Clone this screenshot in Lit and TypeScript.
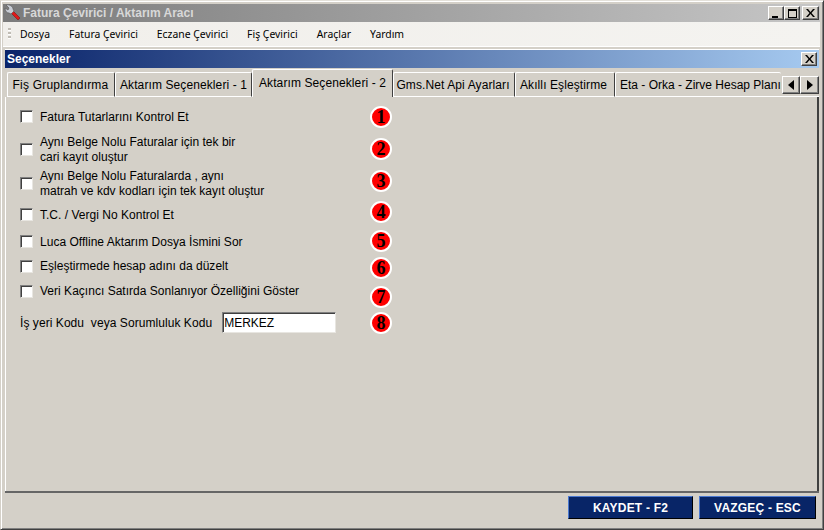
import { LitElement, html, css, svg } from "lit";
import { customElement } from "lit/decorators.js";

const OPTIONS = [
  { cls: "r1", lines: ["Fatura Tutarlarını Kontrol Et"] },
  { cls: "r2", lines: ["Aynı Belge Nolu Faturalar için tek bir", "cari kayıt oluştur"] },
  { cls: "r3", lines: ["Aynı Belge Nolu Faturalarda , aynı", "matrah ve kdv kodları için tek kayıt oluştur"] },
  { cls: "r4", lines: ["T.C. / Vergi No Kontrol Et"] },
  { cls: "r5", lines: ["Luca Offline Aktarım Dosya İsmini Sor"] },
  { cls: "r6", lines: ["Eşleştirmede hesap adını da düzelt"] },
  { cls: "r7", lines: ["Veri Kaçıncı Satırda Sonlanıyor Özelliğini Göster"] },
];
const TABS = [
  { t: "Fiş Gruplandırma", c: "t1" },
  { t: "Aktarım Seçenekleri - 1", c: "t2" },
  { t: "Aktarım Seçenekleri - 2", c: "t3 active" },
  { t: "Gms.Net Api Ayarları", c: "t4" },
  { t: "Akıllı Eşleştirme", c: "t5" },
  { t: "Eta - Orka - Zirve Hesap Planı", c: "t6" },
];
const MENU = ["Dosya", "Fatura Çevirici", "Eczane Çevirici", "Fiş Çevirici", "Araçlar", "Yardım"];

const closeIcon = svg`<svg width="9" height="8" viewBox="0 0 9 8"><path d="M0 0h2l2.500 3L7 0h2L5.500 4 9 8H7L4.500 5 2 8H0l3.500-4z" fill="#000"/></svg>`;

@customElement("app-root")
export class AppRoot extends LitElement {
  static styles = css`
    :host { display: block; width: 824px; height: 530px; overflow: hidden; font-family: "Liberation Sans", Arial, sans-serif; font-size: 12px; color: #000; }
    * { box-sizing: border-box; }
    .window { width: 824px; height: 530px; background: #d4d0c8; display: flex; flex-direction: column;
      border-top: 1px solid #e4e1da; border-left: 1px solid #d4d0c8; border-right: 1px solid #404040; border-bottom: 1px solid #404040;
      box-shadow: inset 1px 1px 0 #fff, inset -1px -1px 0 #808080; padding: 3px 3px 2px 2px; }
    .title { height: 18px; flex: none; display: flex; align-items: center; background: linear-gradient(90deg, #7b7b7b, #c6c6c6); padding: 0 1px 0 1px; color: #d8d8d8; font-weight: bold; font-size: 12px; }
    .title .app-icon { width: 17px; height: 18px; margin-right: 2px; flex: none; }
    .title .text { flex: 1; }
    .wbtn { width: 16px; height: 14px; background: #d4d0c8; display: flex; align-items: center; justify-content: center; flex: none;
      border: 1px solid; border-color: #fff #404040 #404040 #fff; box-shadow: inset -1px -1px 0 #808080; }
    .wbtns { display: flex; }
    .wbtns .wbtn:last-child { margin-left: 2px; width: 17px; }
    .min { width: 6px; height: 2px; background: #000; margin-top: 7px; margin-right: 2px; }
    .max { width: 9px; height: 9px; border: 1px solid #000; border-top-width: 2px; }
    .menu { height: 25px; flex: none; display: flex; align-items: center; background: linear-gradient(90deg, #f1efeb, #f4f3f0); border-bottom: 1px solid #fff; font: 10.400px "Noto Sans", sans-serif; color: #000; padding-left: 5px; }
    .grip { width: 3px; height: 12px; margin-right: 9px; flex: none; background: repeating-linear-gradient(180deg, #c0bcb4 0 2px, #fff 2px 3px, transparent 3px 4px); }
    .menu span { margin-right: 19px; }
    .panel { flex: 1; display: flex; flex-direction: column; min-height: 0; margin: 2px 1px 0 2px; border-top: 1px solid #fff; }
    .ptitle { height: 18px; flex: none; background: linear-gradient(90deg, #0a246a, #a6caf0); color: #fff; font-weight: bold; font-size: 12px; display: flex; align-items: center; justify-content: space-between; padding: 0 2px 0 2px; }
    .tabbar { height: 28px; flex: none; display: flex; align-items: flex-end; margin-top: 1px; padding-left: 2px; }
    .tabs { display: flex; align-items: flex-end; flex: none; width: 774px; overflow: hidden; height: 28px; }
    .tab { height: 25px; flex: none; display: flex; align-items: center; justify-content: center; white-space: nowrap; border-top: 1px solid #fff; border-left: 1px solid #fff; border-right: 1px solid #404040; border-bottom: 1px solid #fff; font-size: 12px; letter-spacing: .1px; overflow: hidden; border-radius: 2px 2px 0 0; padding-top: 1px; }
    .tab.active { height: 28px; border-bottom: none; padding: 0 0 2px 0; }
    .t1 { width: 108px; padding-right: 1px; letter-spacing: .2px; }
    .t2 { width: 137px; }
    .t3 { width: 141px; }
    .t4 { width: 122px; padding-right: 2px; }
    .t5 { width: 100px; padding-right: 3px; }
    .t6 { width: 166px; justify-content: flex-start; padding-left: 4px; border-right: none; letter-spacing: 0; }
    .arrows { display: flex; flex: 1; align-self: stretch; align-items: flex-end; padding: 0 0 2px 1px; border-bottom: 1px solid #fff; }
    .arrow { width: 18px; height: 18px; background: #d4d0c8; border: 1px solid; border-color: #fff #404040 #404040 #fff; box-shadow: inset -1px -1px 0 #808080; display: flex; align-items: center; justify-content: center; flex: none; }
    .arrow + .arrow { width: 19px; }
    .content { flex: 1; min-height: 0; border-left: 1px solid #fff; border-right: 2px solid #404040; display: flex; align-items: flex-start; padding-left: 14px; }
    .options { width: 350px; flex: none; display: flex; flex-direction: column; }
    .row { display: flex; align-items: flex-start; flex: none; line-height: 15px; }
    .box { width: 13px; height: 13px; flex: none; background: #fff; border: 1px solid; border-color: #808080 #e8e6e1 #e8e6e1 #808080; box-shadow: inset 1px 1px 0 #404040; margin-right: 7px; }
    .label { display: flex; flex-direction: column; letter-spacing: .02px; }
    .r1 { margin-top: 13px; }
    .r2 { margin-top: 10px; }
    .r3 { margin-top: 4px; }
    .r2 .box, .r3 .box { margin-top: 8px; }
    .r4 { margin-top: 9px; }
    .r5 { margin-top: 12px; }
    .r6 { margin-top: 9px; }
    .r7 { margin-top: 10px; }
    .r6 .box, .r7 .box { margin-top: 1px; }
    .code { height: 21px; margin-top: 13px; display: flex; align-items: center; white-space: pre; letter-spacing: .06px; }
    .code input { width: 114px; height: 21px; margin: 0 0 0 10px; padding: 1px 2px 1px 1px; background: #fff; font: 12px "Liberation Sans", sans-serif; color: #000; border: 1px solid; border-color: #808080 #e8e6e1 #e8e6e1 #808080; box-shadow: inset 1px 1px 0 #404040; outline: none; }
    .badges { display: flex; flex-direction: column; width: 24px; flex: none; }
    .badge { width: 22px; height: 22px; border-radius: 50%; background: #fe0000; border: 2px solid #fff; display: flex; align-items: center; justify-content: center; flex: none; font: bold 18px/1 "Liberation Serif", serif; color: #000; }
    .b1 { margin-top: 9px; }
    .b2 { margin-top: 10px; }
    .b3 { margin-top: 10px; }
    .b4 { margin-top: 9px; }
    .b5 { margin-top: 7px; }
    .b6 { margin-top: 5px; }
    .b7 { margin-top: 7px; }
    .b8 { margin-top: 4px; }
    .footer { height: 36px; flex: none; display: flex; justify-content: flex-end; align-items: flex-start; gap: 6px; padding: 3px 3px 0 0; border-top: 2px solid #666; }
    .btn { height: 23px; background: #082567; color: #fff; font: bold 12px "Liberation Sans", sans-serif; letter-spacing: .2px; display: flex; align-items: center; justify-content: center; border: 1px solid; border-color: #4a78d0 #000 #000 #4a78d0; }
    .save { width: 125px; }
    .cancel { width: 117px; }
  `;

  render() {
    return html`
      <div class="window">
        <div class="title">
          <svg class="app-icon" viewBox="0 0 17 18">
            <path d="M6 8l8 8 2-2-8-8z" fill="#e01818" stroke="#801010" stroke-width=".6"/>
            <path d="M2 1l3 3-1 2-3-2c0 3 2 5 4 5l2 1 3-3-1-2c0-2-3-5-7-4z" fill="#c8ccd4" stroke="#555" stroke-width=".6"/>
          </svg>
          <span class="text">Fatura Çevirici / Aktarım Aracı</span>
          <div class="wbtns">
            <div class="wbtn"><div class="min"></div></div>
            <div class="wbtn"><div class="max"></div></div>
            <div class="wbtn">${closeIcon}</div>
          </div>
        </div>
        <div class="menu">
          <div class="grip"></div>
          ${MENU.map((m) => html`<span>${m}</span>`)}
        </div>
        <div class="panel">
          <div class="ptitle"><span>Seçenekler</span><div class="wbtn">${closeIcon}</div></div>
          <div class="tabbar">
            <div class="tabs">
              ${TABS.map((t) => html`<div class="tab ${t.c}">${t.t}</div>`)}
            </div>
            <div class="arrows">
              <div class="arrow"><svg width="6" height="10" viewBox="0 0 6 10"><path d="M6 0v10L0 5z" fill="#000"/></svg></div>
              <div class="arrow"><svg width="6" height="10" viewBox="0 0 6 10"><path d="M0 0v10l6-5z" fill="#000"/></svg></div>
            </div>
          </div>
          <div class="content">
            <div class="options">
              ${OPTIONS.map((o) => html`
                <div class="row ${o.cls}">
                  <div class="box"></div>
                  <div class="label">${o.lines.map((l) => html`<span>${l}</span>`)}</div>
                </div>`)}
              <div class="code"><span>İş yeri Kodu  veya Sorumluluk Kodu</span><input .value=${"MERKEZ"} /></div>
            </div>
            <div class="badges">
              ${[1, 2, 3, 4, 5, 6, 7, 8].map((n) => html`<div class="badge b${n}">${n}</div>`)}
            </div>
          </div>
          <div class="footer">
            <div class="btn save">KAYDET - F2</div>
            <div class="btn cancel">VAZGEÇ - ESC</div>
          </div>
        </div>
      </div>
    `;
  }
}
